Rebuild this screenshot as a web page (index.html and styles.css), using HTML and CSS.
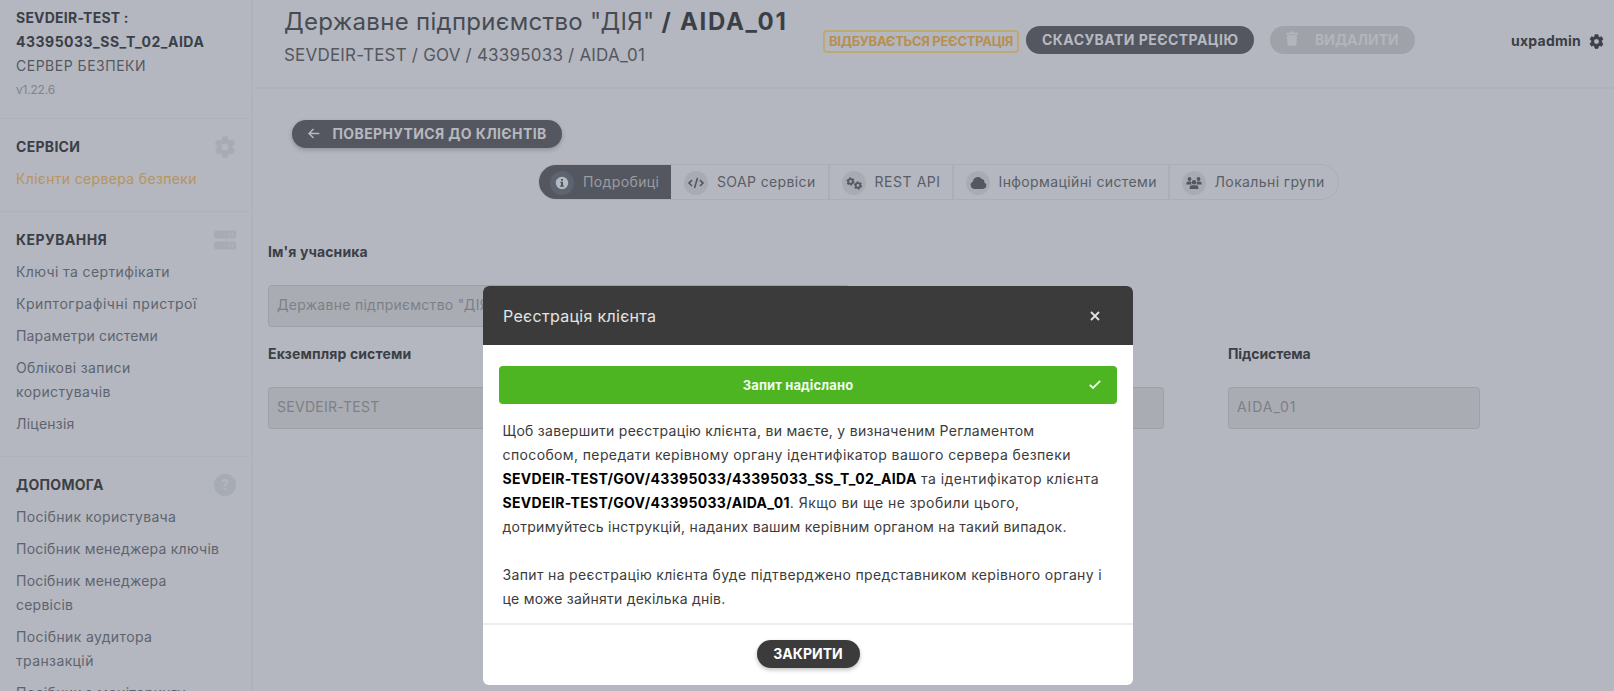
FILE: index.html
```
<!DOCTYPE html>
<html lang="uk">
<head>
<meta charset="utf-8">
<title>Сервер безпеки</title>
<link rel="stylesheet" href="styles.css">
</head>
<body>
<svg class="defs" width="0" height="0">
  <symbol id="gear" viewBox="0 0 24 24"><path fill-rule="evenodd" d="M9.6 1h4.800l.7 3.200 1.900 1.100 3.100-1 2.400 4.200-2.400 2.200v2.600l2.400 2.200-2.400 4.200-3.100-1-1.900 1.100-.7 3.200H9.600l-.7-3.200L7 18.500l-3.100 1-2.400-4.200 2.400-2.200v-2.600L1.500 8.500l2.400-4.200 3.100 1 1.900-1.100zM12 7.700a4.300 4.300 0 1 0 0 8.600 4.300 4.300 0 0 0 0-8.600z" stroke="currentColor" stroke-width="1" stroke-linejoin="round"/></symbol>
</svg>
<div class="app">
  <aside class="sidebar">
    <div class="server">
      <b class="server-code">SEVDEIR-TEST :</b>
      <b class="server-name">43395033_SS_T_02_AIDA</b>
      <span class="server-kind">СЕРВЕР БЕЗПЕКИ</span>
      <span class="version">v1.22.6</span>
    </div>
    <nav class="group">
      <div class="group-head"><h2>СЕРВІСИ</h2><svg class="group-icon" viewBox="0 0 24 24"><use href="#gear"/></svg></div>
      <a class="active">Клієнти сервера безпеки</a>
    </nav>
    <nav class="group">
      <div class="group-head"><h2 class="wide">КЕРУВАННЯ</h2>
        <svg class="group-icon" viewBox="0 0 22 22"><rect y="1.500" width="22" height="8" rx="2"/><rect y="12.500" width="22" height="8" rx="2"/><g class="led"><circle cx="15.500" cy="5.500" r="1"/><circle cx="19" cy="5.500" r="1"/><circle cx="15.500" cy="16.500" r="1"/><circle cx="19" cy="16.500" r="1"/></g></svg></div>
      <a class="ls4">Ключі та сертифікати</a>
      <a class="ls5">Криптографічні пристрої</a>
      <a class="ls1">Параметри системи</a>
      <a class="ls4">Облікові записи користувачів</a>
      <a class="ls2">Ліцензія</a>
    </nav>
    <nav class="group">
      <div class="group-head"><h2>ДОПОМОГА</h2><span class="help-icon">?</span></div>
      <a>Посібник користувача</a>
      <a class="ls2">Посібник менеджера ключів</a>
      <a class="ls2">Посібник менеджера сервісів</a>
      <a class="ls4">Посібник аудитора транзакцій</a>
      <a>Посібник з моніторингу</a>
    </nav>
  </aside>
  <main class="main">
    <header class="topbar">
      <div class="heading">
        <h1><span>Державне підприємство "ДІЯ"</span> <b>/ AIDA_01</b></h1>
        <p>SEVDEIR-TEST / GOV / 43395033 / AIDA_01</p>
      </div>
      <span class="status">ВІДБУВАЄТЬСЯ РЕЄСТРАЦІЯ</span>
      <button class="pill cancel">СКАСУВАТИ РЕЄСТРАЦІЮ</button>
      <button class="pill delete"><svg width="12" height="15" viewBox="0 0 12 15"><path d="M0 1.800h3.500L4.300.5h3.400l.8 1.300H12v1.700H0zM1 4.300h10l-.6 9.200q-.1 1.300-1.400 1.300H3q-1.300 0-1.400-1.300z"/></svg><span>ВИДАЛИТИ</span></button>
      <div class="user"><b>uxpadmin</b><svg width="15" height="15" viewBox="0 0 24 24"><use href="#gear"/></svg></div>
    </header>
    <button class="pill back"><svg width="12" height="11" viewBox="0 0 12 11"><path d="M11.300 5.500H1M5.500 1 1 5.500 5.500 10"/></svg><span>ПОВЕРНУТИСЯ ДО КЛІЄНТІВ</span></button>
    <div class="tabs">
      <a class="tab on"><i><svg viewBox="0 0 24 24"><circle cx="12" cy="12" r="6.200" fill="#b7b9c0"/><path d="M11 8h2v1.800h-2zM10.300 10.800H13v3.700h.9v1.200h-3.800v-1.200h.9V12h-.7z" fill="#54575f"/></svg></i>Подробиці</a>
      <a class="tab soap"><i><svg viewBox="0 0 24 24"><path class="line" d="M8 9.200 5 12.100l3 2.900M16 9.200l3 2.900-3 2.900M13.500 7l-3 10"/></svg></i>SOAP сервіси</a>
      <a class="tab rest"><i><svg viewBox="0 0 24 24"><g class="cogs"><circle cx="8.500" cy="10.500" r="2.300"/><circle cx="16" cy="14.500" r="2.300"/><g class="teeth"><circle cx="8.500" cy="10.500" r="3.500"/><circle cx="16" cy="14.500" r="3.500"/></g></g></svg></i>REST API</a>
      <a class="tab info"><i><svg viewBox="0 0 24 24"><path d="M8 18a4 4 0 0 1-1-7.600A4.900 4.900 0 0 1 15.800 8a3 3 0 0 1 2.500 3.500A3.400 3.400 0 0 1 17 18z"/></svg></i>Інформаційні системи</a>
      <a class="tab groups"><i><svg viewBox="0 0 24 24"><circle cx="7.500" cy="8" r="1.900"/><circle cx="16.500" cy="8" r="1.900"/><circle cx="12" cy="11.200" r="2.300"/><path d="M4.300 13.500v-1a2 2 0 0 1 2-2h2q.7 0 1 .4-.4 1.500.4 2.600zM19.700 13.500v-1a2 2 0 0 0-2-2h-2q-.7 0-1 .4.400 1.500-.4 2.600zM7.600 18v-1.300a2.400 2.400 0 0 1 2.400-2.400h4a2.400 2.400 0 0 1 2.400 2.400V18z"/></svg></i>Локальні групи</a>
    </div>
    <form class="form">
      <label class="member"><b>Ім'я учасника</b><input value='Державне підприємство "ДІЯ"' disabled></label>
      <label><b>Екземпляр системи</b><input value="SEVDEIR-TEST" disabled></label>
      <label class="span2"><b></b><input disabled></label>
      <label class="subsystem"><b>Підсистема</b><input class="id" value="AIDA_01" disabled></label>
    </form>
  </main>
</div>
<section class="modal" role="dialog">
  <header class="modal-head"><h3>Реєстрація клієнта</h3><svg width="10" height="10" viewBox="0 0 10 10"><path d="m1 1 8 8M9 1 1 9"/></svg></header>
  <div class="modal-body">
    <div class="notice"><span>Запит надіслано</span><svg width="12" height="9" viewBox="0 0 12 9"><path d="M.8 4.800 4 8l7.200-7.200"/></svg></div>
    <p><span class="ls25">Щоб завершити реєстрацію клієнта, ви маєте, у визначеним Регламентом</span><br>
      <span class="ls4">способом, передати керівному органу ідентифікатор вашого сервера безпеки</span><br>
      <b>SEVDEIR-TEST/GOV/43395033/43395033_SS_T_02_AIDA</b> <span class="ls45">та ідентифікатор клієнта</span><br>
      <b>SEVDEIR-TEST/GOV/43395033/AIDA_01</b><span class="ls45">. Якщо ви ще не зробили цього,</span><br>
      <span class="ls25">дотримуйтесь інструкцій, наданих вашим керівним органом на такий випадок.</span></p>
    <p>Запит на реєстрацію клієнта буде підтверджено представником керівного органу і<br>
      <span class="ls2">це може зайняти декілька днів.</span></p>
  </div>
  <footer class="modal-foot"><button class="pill close">ЗАКРИТИ</button></footer>
</section>
</body>
</html>
```
FILE: styles.css
```
* { box-sizing: border-box; }
html, body { height: 100%; }
body {
  margin: 0;
  overflow: hidden;
  background: #b4b7bf;
  color: #54585f;
  font: 14px/24px Inter, "Open Sans", sans-serif;
}
h1, h2, h3, p { margin: 0; }
svg { fill: currentColor; flex: none; }
b { color: #3b3f47; }
.defs { display: block; position: absolute; }

.app { display: flex; height: 691px; }
.sidebar {
  width: 253px;
  flex: none;
  height: 691px;
  overflow: hidden;
  border-right: 2px solid #afb2ba;
}
.server {
  display: flex;
  flex-direction: column;
  padding: 6px 16px 16px;
}
.server-code { letter-spacing: .22px; }
.server-name { letter-spacing: .5px; }
.server-kind { letter-spacing: .51px; }
.version { font-size: 12px; color: #7f838a; letter-spacing: -.2px; }
.group {
  display: flex;
  flex-direction: column;
  gap: 8px;
  border-top: 1px solid #afb2ba;
  padding: 16px 16px 20px;
}
.group a { max-width: 208px; color: #5e646f; letter-spacing: .34px; }
.group .active { color: #b9935a; }
.group-head { display: flex; justify-content: space-between; align-items: center; height: 24px; }
.group-head h2 { font-size: 14px; line-height: 24px; color: #3b3f47; letter-spacing: .3px; }
.group-head .wide { letter-spacing: .45px; }
.group-icon { width: 22px; height: 22px; margin-right: -1px; color: #a7abb3; }
.led { fill: #b4b7bf; }
.help-icon {
  width: 22px;
  margin-right: -1px;
  border-radius: 50%;
  background: #a7abb3;
  color: #b4b7bf;
  font-weight: 700;
  line-height: 22px;
  text-align: center;
}
.group .ls1 { letter-spacing: .17px; }
.group .ls2, .ls2 { letter-spacing: .23px; }
.group .ls4, .ls4 { letter-spacing: .38px; }
.group .ls5 { letter-spacing: .52px; }

.main { flex: 1; }
.topbar {
  display: flex;
  height: 89px;
  padding: 0 10px 0 31px;
  border-bottom: 2px solid #afb2ba;
}
.heading { width: 539px; padding-top: 6px; white-space: nowrap; }
h1 { font-size: 24px; line-height: 32px; font-weight: 400; color: #474b53; letter-spacing: .31px; }
h1 b { letter-spacing: 1.700px; }
.heading p { font-size: 17px; line-height: 32px; letter-spacing: .2px; padding-top: 1px; }
.status {
  height: 23px;
  margin-top: 30px;
  width: 196px;
  border: 2px solid #bdaa72;
  border-radius: 4px;
  color: #b78f50;
  font-size: 13px;
  font-weight: 700;
  line-height: 18px;
  letter-spacing: -.27px;
  text-align: center;
  white-space: nowrap;
}
.pill {
  display: flex;
  align-items: center;
  height: 28px;
  padding: 0 16px 1px;
  border: 0;
  border-radius: 14px;
  background: #54575f;
  color: #b7b9c0;
  font: 700 14px/26px Inter, sans-serif;
  white-space: nowrap;
}
.cancel { width: 228px; margin: 26px 0 0 7px; letter-spacing: .45px; }
.delete { width: 145px; margin: 26px 0 0 16px; gap: 17px; background: #9fa2a9; color: #b2b5bd; }
.delete svg { margin-bottom: 2px; }
.user { display: flex; align-items: center; gap: 8px; height: 24px; margin: 29px 0 0 auto; letter-spacing: .25px; color: #3b3f47; }
.back {
  width: 270px;
  margin: 31px 0 0 39px;
  gap: 12.500px;
  letter-spacing: .38px;
  box-shadow: 0 2px 4px rgba(60, 64, 72, .3);
}
.modal-head svg, .notice svg { fill: none; stroke: currentColor; stroke-width: 1.800; }
.back svg { fill: none; stroke: currentColor; stroke-width: 1.500; }
.tabs {
  display: flex;
  width: 801px;
  height: 36px;
  margin: 16px 0 0 284.500px;
  border: 1px solid #abaeb6;
  border-radius: 18px;
  overflow: hidden;
}
.tab {
  display: flex;
  align-items: center;
  gap: 9px;
  padding: 0 0 0 12px;
  border-right: 2px solid #acafb7;
  color: #5a5e66;
  letter-spacing: .38px;
  white-space: nowrap;
}
.tab i { width: 24px; height: 24px; border-radius: 50%; background: #a8abb3; color: #54575f; margin-top: 1px; }
.tab svg { display: block; width: 24px; height: 24px; }
.tab .line { fill: none; stroke: currentColor; stroke-width: 1.600; }
.cogs circle { fill: none; stroke: currentColor; stroke-width: 1.800; }
.cogs .teeth circle { stroke-width: 1.300; stroke-dasharray: 1.830; }
.on { width: 132.500px; padding-left: 11.500px; background: #54575f; color: #999ca3; border-right: 0; }
.on i { background: #5b6470; }
.soap { width: 158.500px; padding-left: 13px; }
.rest { width: 124px; letter-spacing: .55px; }
.info { width: 216px; padding-left: 12px; }
.groups { flex: 1; border: 0; padding-left: 12px; }

.form {
  display: grid;
  grid-template-columns: 256px 576px 251.500px;
  gap: 15px 64px;
  margin: 40px 0 0 15px;
}
.form label { display: flex; flex-direction: column; gap: 20.500px; }
.form b { height: 24px; letter-spacing: .13px; }
.member { grid-column: 1 / -1; width: 582px; }
.subsystem b { letter-spacing: -.09px; }
.form input {
  width: 100%;
  height: 42.500px;
  padding: 0 8px 2px;
  border: 1px solid #9da0a7;
  border-radius: 4px;
  background: #a9acb3;
  color: #7d8087;
  font: 14px Inter, sans-serif;
  letter-spacing: .28px;
}
.form .id { letter-spacing: .93px; }

.modal {
  position: absolute;
  left: 483px;
  top: 286px;
  width: 650px;
  height: 398.500px;
  display: flex;
  flex-direction: column;
  background: #fff;
  border-radius: 6px;
  overflow: hidden;
  color: #3b3b3b;
}
.modal-head {
  display: flex;
  flex: none;
  align-items: center;
  justify-content: space-between;
  height: 59px;
  padding: 0 33px 0 20px;
  background: #3b3b3b;
  color: #e4e4e4;
}
.modal-head h3 { font-size: 16px; font-weight: 400; letter-spacing: .31px; }
.modal-body { flex: 1; min-height: 0; padding: 20.500px 16px 0; }
.notice {
  display: flex;
  align-items: center;
  height: 38px;
  margin-bottom: 15px;
  padding-right: 16px;
  border-radius: 4px;
  background: #4db522;
  color: #f1faee;
  font-size: 13px;
  font-weight: 700;
  letter-spacing: .12px;
}
.notice span { flex: 1; text-align: center; padding-left: 8px; }
.modal-body p { padding-left: 3.500px; margin-bottom: 24px; letter-spacing: .34px; white-space: nowrap; }
.modal-body b { color: #000; letter-spacing: .33px; }
.ls25 { letter-spacing: .28px; }
.ls45 { letter-spacing: .45px; }
.modal-foot { display: flex; flex: none; justify-content: center; height: 61.500px; border-top: 2px solid #ededed; padding-top: 15px; }
.close { width: 103px; padding: 0 0 1px; justify-content: center; background: #3b3b3b; color: #fff; box-shadow: 0 2px 4px rgba(0, 0, 0, .25); }
```
